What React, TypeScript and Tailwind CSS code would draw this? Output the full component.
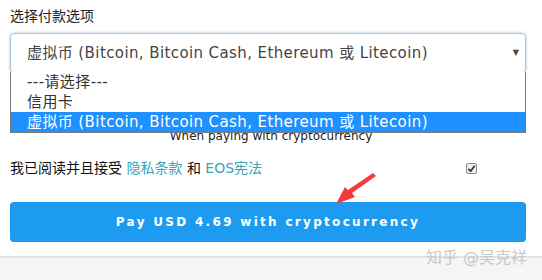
import React from "react";

const font = { fontFamily: '"DejaVu Sans", "Noto Sans CJK SC", sans-serif' };

const options = [
  "---请选择---",
  "信用卡",
  "虚拟币 (Bitcoin, Bitcoin Cash, Ethereum 或 Litecoin)",
];

export default function App() {
  return (
    <div
      className="relative w-[542px] h-[280px] overflow-hidden bg-[#f5f5f5]"
      style={font}
    >
      <div className="h-[258px] bg-white border-b-2 border-[#e4e4e4] px-[10px] pt-[7px]">
        <div className="text-[14px] leading-[18px] text-[#222]">选择付款选项</div>

        {/* Select */}
        <div className="mt-[8px] h-[40px] w-[516px] rounded-[4px] border border-[#a8c5e2] shadow-[0_0_3px_rgba(102,160,220,0.6)] flex items-center justify-between pl-[16px] pr-[6px]">
          <span className="text-[15px] text-[#444] tracking-[0.4px]">{options[2]}</span>
          <span className="text-[8px] text-[#444]">▼</span>
        </div>

        <div className="mt-[56px] text-center text-[12px] leading-[14px] text-[#222]">
          When paying with cryptocurrency
        </div>

        {/* Terms */}
        <div className="mt-[16px] flex items-center justify-between pr-[55px]">
          <div className="text-[14px] leading-[18px] text-[#111]">
            我已阅读并且接受 <span className="text-[#3aa3b6]">隐私条款</span> 和{" "}
            <span className="text-[#3aa3b6]">EOS宪法</span>
          </div>
          <div className="w-[11px] h-[11px] rounded-[2px] border border-[#8a8a8a] bg-[#f0f0f0] flex items-center justify-center">
            <svg viewBox="0 0 10 10" className="w-[9px] h-[9px]">
              <path d="M1.5 5.5 L4 8 L8.5 2" fill="none" stroke="#333" strokeWidth="2" />
            </svg>
          </div>
        </div>

        {/* Button */}
        <div className="mt-[25px] h-[40px] w-[516px] rounded-[4px] bg-[#1d9bf0] flex items-center justify-center">
          <span className="text-white text-[12px] font-bold tracking-[2.3px]">
            Pay USD 4.69 with cryptocurrency
          </span>
        </div>
      </div>

      {/* Open dropdown list */}
      <div className="absolute left-[10px] top-[72px] w-[516px] bg-white border border-t-0 border-[#7a7a7a]">
        {options.map((o, i) => (
          <div
            key={o}
            className={
              i === 2
                ? "h-[20px] pl-[16px] text-[15px] tracking-[0.4px] leading-[20px] bg-[#1e90ff] text-white"
                : "h-[20px] pl-[16px] text-[15px] tracking-[0.4px] leading-[20px] text-[#333]"
            }
          >
            {o}
          </div>
        ))}
      </div>

      {/* Red annotation arrow */}
      <svg className="absolute left-0 top-0" width="542" height="280">
        <polygon
          points="376,176 352,193 355,197 336,204 345,187 348,190 373,173"
          fill="#f23a3a"
        />
      </svg>

      {/* Watermark */}
      <div className="absolute left-[426px] top-[246px] text-[16px] text-[#c8c8c8]">
        知乎 @吴克祥
      </div>
    </div>
  );
}
